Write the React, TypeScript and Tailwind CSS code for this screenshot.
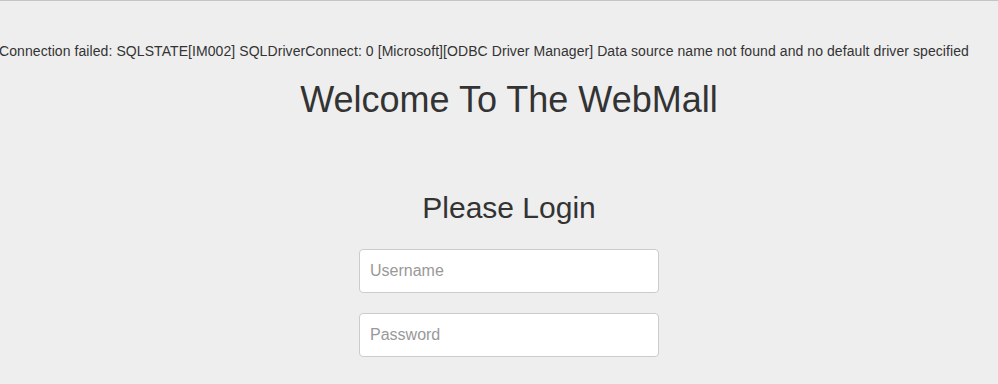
import React from 'react';

function App() {
  return (
    <div className="w-full min-h-[384px] bg-[#eeeeee] border-t border-[#c4c4c4] text-[#333333] font-['Liberation_Sans',Arial,sans-serif]">
      <div className="pt-[40px] text-[14px] leading-[20px] tracking-[0.075px] whitespace-nowrap -ml-[1px]">
        Connection failed: SQLSTATE[IM002] SQLDriverConnect: 0 [Microsoft][ODBC Driver Manager] Data source name not found and no default driver specified
      </div>
      <div className="flex flex-col items-center pl-[20px]">
        <h1 className="mt-[19px] text-[36px] leading-[40px] font-normal">Welcome To The WebMall</h1>
        <h2 className="mt-[71px] text-[30px] leading-[33px] font-normal">Please Login</h2>
        <form className="mt-[25px] flex flex-col gap-[20px] w-[300px]">
          <input
            type="text"
            placeholder="Username"
            className="h-[44px] w-full rounded-[4px] border border-[#cccccc] bg-white px-[10px] text-[16px] placeholder:text-[#999999] outline-none"
          />
          <input
            type="password"
            placeholder="Password"
            className="h-[44px] w-full rounded-[4px] border border-[#cccccc] bg-white px-[10px] text-[16px] placeholder:text-[#999999] outline-none"
          />
        </form>
      </div>
    </div>
  );
}

export default App;
